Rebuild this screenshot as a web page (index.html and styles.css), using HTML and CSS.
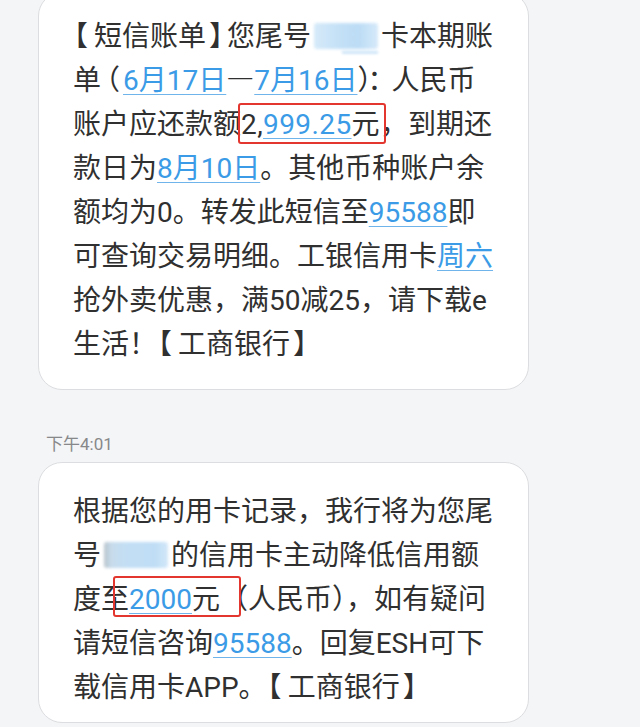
FILE: index.html
```html
<!DOCTYPE html>
<html lang="zh-CN">
<head>
<meta charset="utf-8">
<title>短信</title>
<link rel="stylesheet" href="styles.css">
</head>
<body>
<div class="chat">
  <div class="bubble first">
    <p class="msg"><span class="pl">【</span>短信账单<span class="pr">】</span>您尾号<span class="mask ul"></span>卡本期账<br>单<span class="pn">（</span><a class="lnk">6月17日</a><span class="dash">—</span><a class="lnk">7月16日</a><span class="pn2">）：</span>人民币<br>账户应还款额<span class="mark m1">2,<a class="lnk">999.25</a>元</span>，到期还<br>款日为<a class="lnk">8月10日</a>。其他币种账户余<br>额均为0。转发此短信至<a class="lnk">95588</a>即<br>可查询交易明细。工银信用卡<a class="lnk">周六</a><br>抢外卖优惠，满50减25，请下载e<br>生活！<span class="pl">【</span>工商银行<span class="pr">】</span></p>
  </div>
  <div class="time">下午4:01</div>
  <div class="bubble second">
    <p class="msg">根据您的用卡记录，我行将为您尾<br>号<span class="mask gray"></span>的信用卡主动降低信用额<br>度<span class="mark m2">至<a class="lnk">2000</a>元（</span>人民币），如有疑问<br>请短信咨询<a class="lnk">95588</a>。回复ESH可下<br>载信用卡APP。<span class="pl">【</span>工商银行<span class="pr">】</span></p>
  </div>
</div>
</body>
</html>
```
FILE: styles.css
```css
html, body {
  margin: 0;
  padding: 0;
  background: #f4f5f6;
  height: 100%;
  overflow: hidden;
}

.chat {
  padding-left: 38px;
  font-family: Roboto, "Noto Sans CJK SC", sans-serif;
}

.bubble {
  box-sizing: border-box;
  width: 491px;
  background: #fff;
  border: 1px solid #dcdde0;
  border-radius: 24px;
  padding: 22px 10px 22px 34px;
}

.bubble.first {
  margin-top: -8px;
}

.bubble.second {
  padding-top: 27px;
  padding-bottom: 12px;
}

.msg {
  margin: 0;
  font-size: 28px;
  line-height: 44px;
  color: #303030;
  white-space: nowrap;
}

.lnk {
  color: #3b9be6;
  text-decoration: underline;
  text-decoration-thickness: 1px;
  text-underline-offset: 4px;
  text-decoration-color: #6fb4ea;
}

.pl,
.pr,
.pn,
.pn2,
.dash {
  font-family: "Noto Sans CJK SC", sans-serif;
  line-height: 1;
}

.pl {
  font-feature-settings: "halt";
  margin-left: 1px;
  margin-right: 6px;
}

.pr {
  font-feature-settings: "halt";
  margin-left: 3px;
  margin-right: 4px;
}

.pn {
  font-feature-settings: "halt";
  margin-left: 5px;
  margin-right: 3px;
}

.pn2 {
  letter-spacing: -4px;
}

.mask {
  display: inline-block;
  position: relative;
  width: 64px;
  height: 26px;
  vertical-align: -3px;
  margin: 0 3px;
  background: linear-gradient(90deg, #d6eaf9 0%, #c3e0f6 40%, #bcdcf5 70%, #d6eafa 100%);
  filter: blur(1.5px);
  border-radius: 3px;
}

.mask.gray {
  background: linear-gradient(90deg, #b9c4cc 0%, #c7dcec 12%, #c2def5 40%, #bfddf5 80%, #d3e8f9 100%);
}

.mask.ul::after {
  content: "";
  position: absolute;
  left: 28px;
  right: 0;
  bottom: -4px;
  height: 1px;
  background: #6fb4ea;
}

.mark {
  position: relative;
}

.mark::after {
  content: "";
  position: absolute;
  top: -5px;
  bottom: -3px;
  border: 2px solid #e2362f;
  border-radius: 3px;
  pointer-events: none;
}

.m1 {
  letter-spacing: 0.4px;
}

.m1::after {
  left: -3px;
  right: -6px;
}

.m2::after {
  top: -7px;
  bottom: -1px;
  left: 12px;
  right: 7px;
}

.time {
  margin: 44px 0 8px 8px;
  font-size: 17px;
  line-height: 20px;
  color: #87888a;
}
```
